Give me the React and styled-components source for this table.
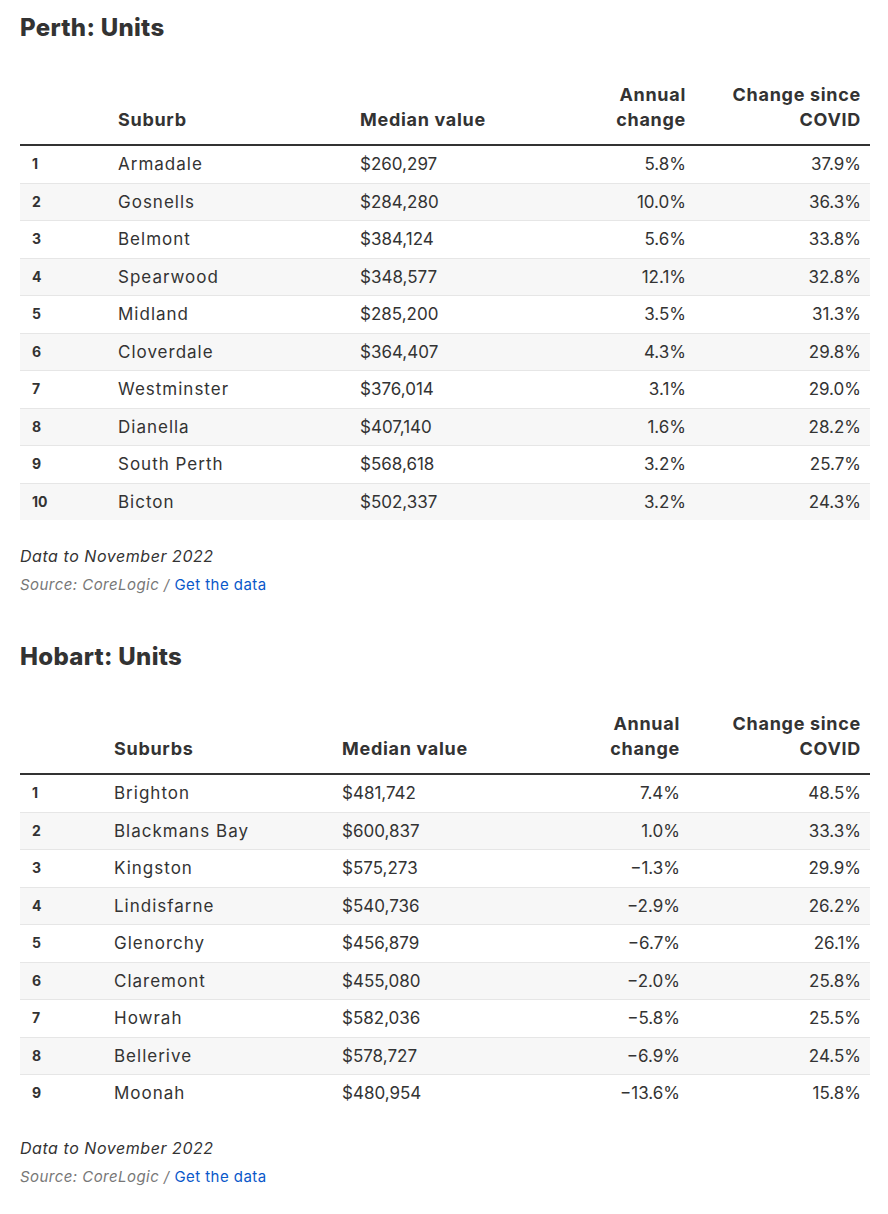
import React from "react";
import styled, { createGlobalStyle } from "styled-components";

const Global = createGlobalStyle`
  html, body { margin: 0; padding: 0; background: #fff; }
  body { font-family: Inter, "Noto Sans", "Liberation Sans", sans-serif; color: #333; }
`;

const Page = styled.div`
  padding: 0 18px 40px 20px;
  width: 850px;
`;

const Section = styled.section`
  margin-bottom: 31px;
`;

const Title = styled.h2`
  margin: 0;
  padding-top: 14px;
  font-size: 24px;
  line-height: 28px;
  font-weight: 800;
  letter-spacing: 0.3px;
  color: #333;
`;

const Table = styled.table`
  width: 850px;
  margin-top: 32px;
  border-collapse: collapse;
  table-layout: fixed;
`;

const Th = styled.th`
  padding: 8px ${(p) => (p.$right ? "9px" : "12px")} 12px 12px;
  font-size: 18px;
  line-height: 25px;
  font-weight: 700;
  letter-spacing: 0.7px;
  text-align: ${(p) => (p.$right ? "right" : "left")};
  vertical-align: bottom;
  border-bottom: 2px solid #333;
  color: #333;
`;

const Tr = styled.tr`
  background: ${(p) => (p.$alt ? "#f7f7f7" : "#fff")};
  border-bottom: 1px solid #e6e6e6;
  &:last-child { border-bottom: none; }
`;

const Td = styled.td`
  padding: 6px ${(p) => (p.$right ? "9px" : "12px")} 6px 12px;
  font-size: 17px;
  line-height: 24.5px;
  font-weight: 400;
  letter-spacing: ${(p) => (p.$name ? "1px" : "0")};
  text-align: ${(p) => (p.$right ? "right" : "left")};
  color: #333;
  white-space: nowrap;
`;

const Rank = styled(Td)`
  font-size: 14px;
  font-weight: 700;
`;

const Notes = styled.div`
  margin-top: 22px;
`;

const Note = styled.p`
  margin: 0;
  font-size: 16px;
  line-height: 28px;
  font-style: italic;
  letter-spacing: 0.55px;
  color: #333;
`;

const Source = styled.p`
  margin: 2px 0 0;
  font-size: 15px;
  line-height: 26px;
  font-style: italic;
  letter-spacing: 0.45px;
  color: #777;
`;

const Link = styled.a`
  font-style: normal;
  color: #0a58ca;
  text-decoration: none;
`;

const perth = [
  ["Armadale", "$260,297", "5.8%", "37.9%"],
  ["Gosnells", "$284,280", "10.0%", "36.3%"],
  ["Belmont", "$384,124", "5.6%", "33.8%"],
  ["Spearwood", "$348,577", "12.1%", "32.8%"],
  ["Midland", "$285,200", "3.5%", "31.3%"],
  ["Cloverdale", "$364,407", "4.3%", "29.8%"],
  ["Westminster", "$376,014", "3.1%", "29.0%"],
  ["Dianella", "$407,140", "1.6%", "28.2%"],
  ["South Perth", "$568,618", "3.2%", "25.7%"],
  ["Bicton", "$502,337", "3.2%", "24.3%"],
];

const hobart = [
  ["Brighton", "$481,742", "7.4%", "48.5%"],
  ["Blackmans Bay", "$600,837", "1.0%", "33.3%"],
  ["Kingston", "$575,273", "\u22121.3%", "29.9%"],
  ["Lindisfarne", "$540,736", "\u22122.9%", "26.2%"],
  ["Glenorchy", "$456,879", "\u22126.7%", "26.1%"],
  ["Claremont", "$455,080", "\u22122.0%", "25.8%"],
  ["Howrah", "$582,036", "\u22125.8%", "25.5%"],
  ["Bellerive", "$578,727", "\u22126.9%", "24.5%"],
  ["Moonah", "$480,954", "\u221213.6%", "15.8%"],
];

function DataTable({ title, nameHeader, rows, cols }) {
  return (
    <Section>
      <Title>{title}</Title>
      <Table>
        <colgroup>
          {cols.map((w, i) => (
            <col key={i} style={{ width: w }} />
          ))}
        </colgroup>
        <thead>
          <tr>
            <Th />
            <Th>{nameHeader}</Th>
            <Th>Median value</Th>
            <Th $right>
              Annual
              <br />
              change
            </Th>
            <Th $right>
              Change since
              <br />
              COVID
            </Th>
          </tr>
        </thead>
        <tbody>
          {rows.map((r, i) => (
            <Tr key={i} $alt={i % 2 === 1}>
              <Rank>{i + 1}</Rank>
              <Td $name>{r[0]}</Td>
              <Td>{r[1]}</Td>
              <Td $right>{r[2]}</Td>
              <Td $right>{r[3]}</Td>
            </Tr>
          ))}
        </tbody>
      </Table>
      <Notes>
        <Note>Data to November 2022</Note>
        <Source>
          Source: CoreLogic / <Link href="#">Get the data</Link>
        </Source>
      </Notes>
    </Section>
  );
}

export default function App() {
  return (
    <Page>
      <Global />
      <DataTable
        title="Perth: Units"
        nameHeader="Suburb"
        rows={perth}
        cols={[86, 242, 230, 117, 175]}
      />
      <DataTable
        title="Hobart: Units"
        nameHeader="Suburbs"
        rows={hobart}
        cols={[82, 228, 230, 129, 181]}
      />
    </Page>
  );
}
